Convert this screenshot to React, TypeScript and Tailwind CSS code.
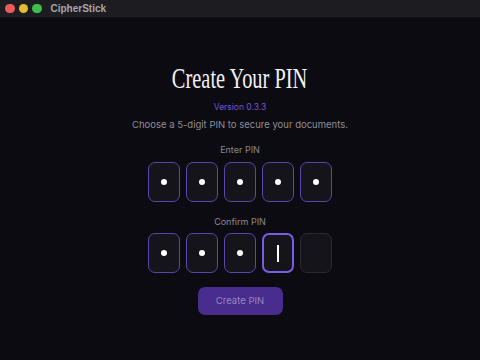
import React from 'react'

const sans = { fontFamily: 'Inter, "Noto Sans", sans-serif' }

function Box({ filled, focused }: { filled?: boolean; focused?: boolean }) {
  const border = focused
    ? 'border-2 border-[#7a5ce6]'
    : filled
      ? 'border-[1.5px] border-[#5e45ad]'
      : 'border-[1.5px] border-[#2a2830]'
  return (
    <div className={`w-[32px] h-[40px] rounded-[7px] bg-[#15141b] flex items-center justify-center ${border}`}>
      {filled && <div className="w-[6.5px] h-[6.5px] rounded-full bg-white" />}
      {focused && <div className="w-[1.5px] h-[17px] bg-white" />}
    </div>
  )
}

export default function App() {
  return (
    <div className="w-[480px] h-[360px] bg-[#0c0b11] flex flex-col overflow-hidden" style={sans}>
      {/* title bar */}
      <div className="h-[18px] bg-[#1d1c21] border-b border-[#111015] flex items-center pl-[5px] gap-[4px] shrink-0">
        <div className="w-[9.5px] h-[9.5px] rounded-full bg-[#ee5a5c]" />
        <div className="w-[9.5px] h-[9.5px] rounded-full bg-[#e8b932]" />
        <div className="w-[9.5px] h-[9.5px] rounded-full bg-[#3fbf4a]" />
        <span className="ml-[5px] text-[10px] font-bold text-[#a6a5ab]" style={{ fontFamily: '"Liberation Sans", sans-serif' }}>
          CipherStick
        </span>
      </div>

      <div className="flex flex-col items-center pt-[43px]">
        <h1
          className="text-[30px] leading-[34px] text-[#f2f1f5] scale-x-[0.68]"
          style={{ fontFamily: '"Liberation Serif", serif' }}
        >
          Create Your PIN
        </h1>
        <div className="mt-[6px] text-[8.5px] leading-[12px] text-[#7356d6]">Version 0.3.3</div>
        <div className="mt-[5px] text-[9.5px] leading-[14px] text-[#8f8e98]">
          Choose a 5-digit PIN to secure your documents.
        </div>

        <div className="mt-[12px] text-[9px] leading-[12px] text-[#8a8993]">Enter PIN</div>
        <div className="mt-[6px] flex gap-[6px]">
          <Box filled />
          <Box filled />
          <Box filled />
          <Box filled />
          <Box filled />
        </div>

        <div className="mt-[14px] text-[9px] leading-[12px] text-[#8a8993]">Confirm PIN</div>
        <div className="mt-[5px] flex gap-[6px]">
          <Box filled />
          <Box filled />
          <Box filled />
          <Box focused />
          <Box />
        </div>

        <button className="mt-[14px] w-[85px] h-[28px] rounded-[7px] bg-[#482c8e] text-[9.5px] text-[#9488bd]">
          Create PIN
        </button>
      </div>
    </div>
  )
}
